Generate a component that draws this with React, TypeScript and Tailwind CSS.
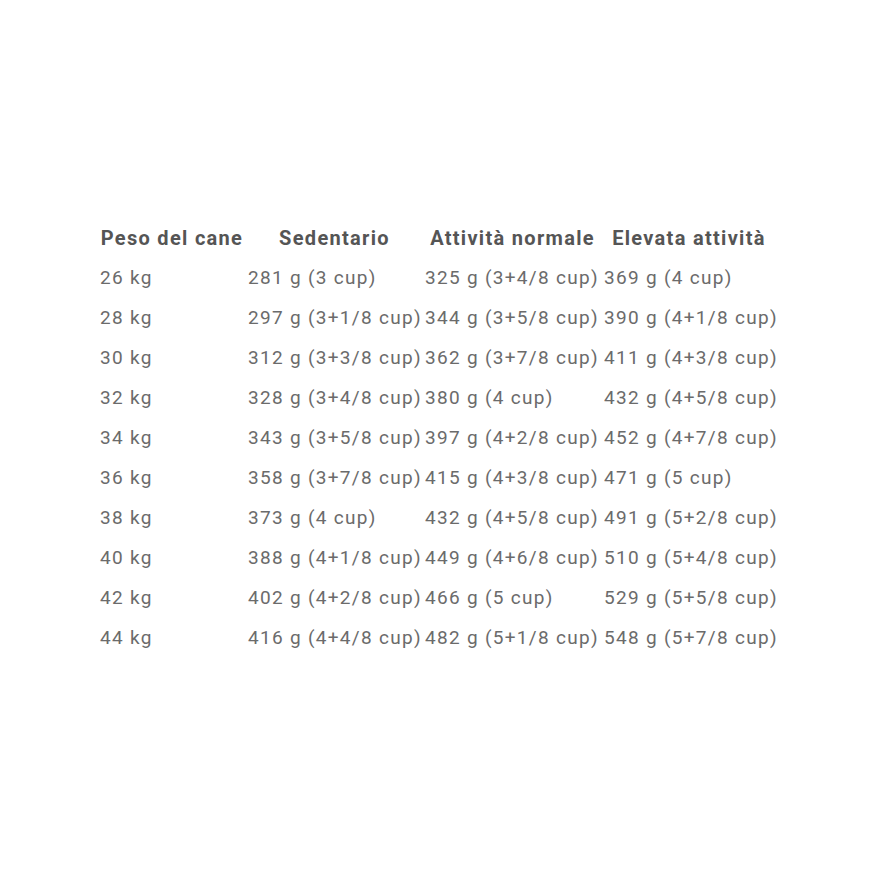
const rows: [string, string, string, string][] = [
  ['26 kg', '281 g (3 cup)', '325 g (3+4/8 cup)', '369 g (4 cup)'],
  ['28 kg', '297 g (3+1/8 cup)', '344 g (3+5/8 cup)', '390 g (4+1/8 cup)'],
  ['30 kg', '312 g (3+3/8 cup)', '362 g (3+7/8 cup)', '411 g (4+3/8 cup)'],
  ['32 kg', '328 g (3+4/8 cup)', '380 g (4 cup)', '432 g (4+5/8 cup)'],
  ['34 kg', '343 g (3+5/8 cup)', '397 g (4+2/8 cup)', '452 g (4+7/8 cup)'],
  ['36 kg', '358 g (3+7/8 cup)', '415 g (4+3/8 cup)', '471 g (5 cup)'],
  ['38 kg', '373 g (4 cup)', '432 g (4+5/8 cup)', '491 g (5+2/8 cup)'],
  ['40 kg', '388 g (4+1/8 cup)', '449 g (4+6/8 cup)', '510 g (5+4/8 cup)'],
  ['42 kg', '402 g (4+2/8 cup)', '466 g (5 cup)', '529 g (5+5/8 cup)'],
  ['44 kg', '416 g (4+4/8 cup)', '482 g (5+1/8 cup)', '548 g (5+7/8 cup)'],
];

const headers = ['Peso del cane', 'Sedentario', 'Attività normale', 'Elevata attività'];
const widths = ['w-[148px]', 'w-[177px]', 'w-[179px]', 'w-[174px]'];

export default function App() {
  return (
    <div className="min-h-[880px] w-[880px] bg-white pl-[100px] pt-[218px] font-['Roboto',sans-serif]">
      <table className="table-fixed border-collapse">
        <thead>
          <tr className="h-[40px]">
            {headers.map((h, i) => (
              <th
                key={h}
                className={`${widths[i]} p-0 pr-[4px] text-center align-middle text-[20px] font-bold tracking-[1.3px] text-[#555555] whitespace-nowrap`}
              >
                {h}
              </th>
            ))}
          </tr>
        </thead>
        <tbody>
          {rows.map((r) => (
            <tr key={r[0]} className="h-[40px]">
              {r.map((c, i) => (
                <td
                  key={i}
                  className="p-0 text-left align-middle text-[19px] tracking-[1.3px] text-[#6b6b6b] whitespace-nowrap"
                >
                  {c}
                </td>
              ))}
            </tr>
          ))}
        </tbody>
      </table>
    </div>
  );
}
